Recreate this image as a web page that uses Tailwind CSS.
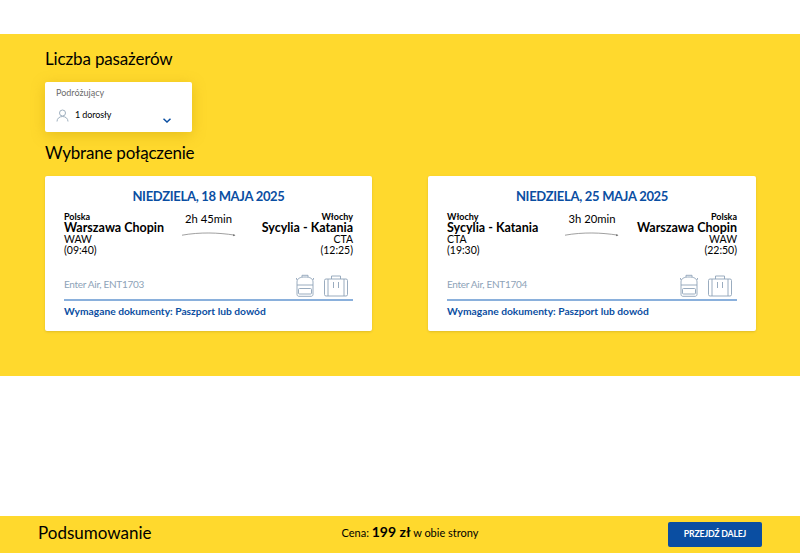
<!DOCTYPE html>
<html lang="pl">
<head>
<meta charset="utf-8">
<title>Podsumowanie</title>
<script src="https://cdn.jsdelivr.net/npm/@tailwindcss/browser@4"></script>
</head>
<body class="bg-white font-['Lato',sans-serif] text-black h-[553px] overflow-hidden flex flex-col">
  <div class="h-[34px]"></div>

  <main class="bg-[#ffd92d] h-[342px] pl-[45px] pr-[44px] pt-[12px]">
    <h2 class="text-[17px] leading-[26px] tracking-[-0.15px]">Liczba pasażerów</h2>
    <div class="mt-[10px] w-[147px] h-[50px] bg-white rounded-[2px] shadow-[0_3px_14px_rgba(180,140,0,0.35)] pl-[11px] pt-[5px] relative">
      <div class="text-[9px] leading-[12px] text-[#6b6b6b]">Podróżujący</div>
      <div class="flex items-center mt-[9px]">
        <svg class="w-[13px] h-[13px]" viewBox="0 0 13 13" fill="none" stroke="#9fb0bf" stroke-width="1">
          <circle cx="6.500" cy="4" r="3"/>
          <path d="M1 12.500c0-3 2.400-5 5.500-5s5.500 2 5.500 5"/>
        </svg>
        <span class="ml-[6px] text-[9px] leading-[14px] tracking-[-0.1px]">1 dorosły</span>
      </div>
      <svg class="absolute left-[118px] top-[36px] w-[8px] h-[5px]" viewBox="0 0 8 5" fill="none" stroke="#0a4ea2" stroke-width="1.500">
        <path d="M0.500 0.800 4 4l3.500-3.200"/>
      </svg>
    </div>
    <h2 class="text-[17px] leading-[26px] tracking-[-0.2px] mt-[8px]">Wybrane połączenie</h2>

    <div class="mt-[10px] flex justify-between">
      <section class="w-[327px] h-[155px] bg-white rounded-[2px] shadow-sm px-[19px] pt-[12px]">
        <h3 class="text-center text-[13px] leading-[16px] tracking-[-0.3px] font-bold text-[#0a4ea2]">NIEDZIELA, 18 MAJA 2025</h3>
        <div class="flex justify-between mt-[8px] h-[50px]">
          <div class="w-[110px] whitespace-nowrap">
            <div class="text-[9px] leading-[8px] font-bold mt-[1px]">Polska</div>
            <div class="text-[12.5px] leading-[13px] font-bold">Warszawa Chopin</div>
            <div class="text-[10.500px] leading-[11px]">WAW</div>
            <div class="text-[10.500px] leading-[11px]">(09:40)</div>
          </div>
          <div class="w-[54px] flex flex-col items-center">
            <div class="text-[11.25px] leading-[14px] whitespace-nowrap">2h 45min</div>
            <svg class="w-[54px] h-[6px] mt-[5px]" viewBox="0 0 54 6" fill="none" stroke="#777" stroke-width="0.700">
              <path d="M0 4.200C18 1 36 1.500 53 4.200"/>
              <path d="M51 3.200 53.500 4.200 51 5.200" fill="#777" stroke="none"/>
            </svg>
          </div>
          <div class="w-[110px] whitespace-nowrap flex flex-col items-end">
            <div class="text-[9px] leading-[8px] font-bold mt-[1px]">Włochy</div>
            <div class="text-[12.5px] leading-[13px] font-bold">Sycylia - Katania</div>
            <div class="text-[10.500px] leading-[11px]">CTA</div>
            <div class="text-[10.500px] leading-[11px]">(12:25)</div>
          </div>
        </div>
        <div class="flex items-end justify-between h-[39px] border-b-2 border-[#8ab0dc] pb-[2px]">
          <span class="text-[10px] leading-[14px] tracking-[-0.3px] text-[#8ea3b8] mb-[6px]">Enter Air, ENT1703</span>
          <div class="flex items-end gap-[10px] mr-[5px]">
            <svg class="w-[18px] h-[23px]" viewBox="0 0 18 23" fill="none" stroke="#8ea3b8" stroke-width="0.900">
              <path d="M1 20.500V8C1 4.500 4 3 9 3s8 1.500 8 5v12.500c0 1-.8 1.800-1.800 1.800H2.800C1.800 22.300 1 21.500 1 20.500Z"/>
              <path d="M6 3V1.300h6V3M1 6 0.300 4M17 6l.7-2"/>
              <path d="M1 11h16M3.500 14.500h11c.8 0 1 .5 1 1V19c0 .5-.2 1-1 1h-11c-.8 0-1-.5-1-1v-3.500c0-.5.2-1 1-1Z"/>
            </svg>
            <svg class="w-[24px] h-[22px]" viewBox="0 0 24 22" fill="none" stroke="#8ea3b8" stroke-width="0.900">
              <rect x="0.500" y="4" width="23" height="17" rx="1.500"/>
              <path d="M7.500 4V1h9v3M4 4v17M20 4v17M9.500 7v6M14.500 7v6"/>
            </svg>
          </div>
        </div>
        <p class="text-[10.25px] leading-[14px] font-bold text-[#0a4ea2] mt-[3px]">Wymagane dokumenty: Paszport lub dowód</p>
      </section>

      <section class="w-[328px] h-[155px] bg-white rounded-[2px] shadow-sm px-[19px] pt-[12px]">
        <h3 class="text-center text-[13px] leading-[16px] tracking-[-0.3px] font-bold text-[#0a4ea2]">NIEDZIELA, 25 MAJA 2025</h3>
        <div class="flex justify-between mt-[8px] h-[50px]">
          <div class="w-[110px] whitespace-nowrap">
            <div class="text-[9px] leading-[8px] font-bold mt-[1px]">Włochy</div>
            <div class="text-[12.5px] leading-[13px] font-bold">Sycylia - Katania</div>
            <div class="text-[10.500px] leading-[11px]">CTA</div>
            <div class="text-[10.500px] leading-[11px]">(19:30)</div>
          </div>
          <div class="w-[54px] flex flex-col items-center">
            <div class="text-[11.25px] leading-[14px] whitespace-nowrap">3h 20min</div>
            <svg class="w-[54px] h-[6px] mt-[5px]" viewBox="0 0 54 6" fill="none" stroke="#777" stroke-width="0.700">
              <path d="M0 4.200C18 1 36 1.500 53 4.200"/>
              <path d="M51 3.200 53.500 4.200 51 5.200" fill="#777" stroke="none"/>
            </svg>
          </div>
          <div class="w-[110px] whitespace-nowrap flex flex-col items-end">
            <div class="text-[9px] leading-[8px] font-bold mt-[1px]">Polska</div>
            <div class="text-[12.5px] leading-[13px] font-bold">Warszawa Chopin</div>
            <div class="text-[10.500px] leading-[11px]">WAW</div>
            <div class="text-[10.500px] leading-[11px]">(22:50)</div>
          </div>
        </div>
        <div class="flex items-end justify-between h-[39px] border-b-2 border-[#8ab0dc] pb-[2px]">
          <span class="text-[10px] leading-[14px] tracking-[-0.3px] text-[#8ea3b8] mb-[6px]">Enter Air, ENT1704</span>
          <div class="flex items-end gap-[10px] mr-[5px]">
            <svg class="w-[18px] h-[23px]" viewBox="0 0 18 23" fill="none" stroke="#8ea3b8" stroke-width="0.900">
              <path d="M1 20.500V8C1 4.500 4 3 9 3s8 1.500 8 5v12.500c0 1-.8 1.800-1.800 1.800H2.800C1.800 22.300 1 21.500 1 20.500Z"/>
              <path d="M6 3V1.300h6V3M1 6 0.300 4M17 6l.7-2"/>
              <path d="M1 11h16M3.500 14.500h11c.8 0 1 .5 1 1V19c0 .5-.2 1-1 1h-11c-.8 0-1-.5-1-1v-3.500c0-.5.2-1 1-1Z"/>
            </svg>
            <svg class="w-[24px] h-[22px]" viewBox="0 0 24 22" fill="none" stroke="#8ea3b8" stroke-width="0.900">
              <rect x="0.500" y="4" width="23" height="17" rx="1.500"/>
              <path d="M7.500 4V1h9v3M4 4v17M20 4v17M9.500 7v6M14.500 7v6"/>
            </svg>
          </div>
        </div>
        <p class="text-[10.25px] leading-[14px] font-bold text-[#0a4ea2] mt-[3px]">Wymagane dokumenty: Paszport lub dowód</p>
      </section>
    </div>
  </main>

  <div class="flex-1"></div>

  <footer class="bg-[#ffd92d] h-[37px] flex items-center pl-[38px] pr-[38px] justify-between">
    <div class="w-[250px] text-[17px] leading-[24px] mb-[3px]">Podsumowanie</div>
    <div class="text-[11px] leading-[18px] whitespace-nowrap mb-[4px]">Cena: <span class="text-[14px] font-bold">199 zł</span> w obie strony</div>
    <div class="w-[230px] flex justify-end">
      <button class="w-[94px] h-[25px] pb-[1px] bg-[#0a4ea2] rounded-[2px] text-white text-[8.750px] tracking-[-0.2px] font-bold">PRZEJDŹ DALEJ</button>
    </div>
  </footer>
</body>
</html>
